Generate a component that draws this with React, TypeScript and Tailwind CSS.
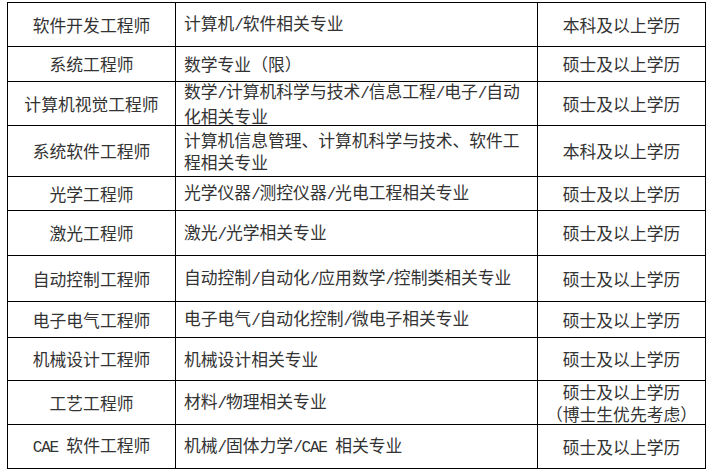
import React from "react";

type Row = { h: string; a: string; b: string[]; c: string[] };

const rows: Row[] = [
  { h: "h-[44px]", a: "软件开发工程师", b: ["计算机/软件相关专业"], c: ["本科及以上学历"] },
  { h: "h-[35px]", a: "系统工程师", b: ["数学专业（限）"], c: ["硕士及以上学历"] },
  {
    h: "h-[44px]",
    a: "计算机视觉工程师",
    b: ["数学/计算机科学与技术/信息工程/电子/自动", "化相关专业"],
    c: ["硕士及以上学历"],
  },
  {
    h: "h-[51px]",
    a: "系统软件工程师",
    b: ["计算机信息管理、计算机科学与技术、软件工", "程相关专业"],
    c: ["本科及以上学历"],
  },
  { h: "h-[34px]", a: "光学工程师", b: ["光学仪器/测控仪器/光电工程相关专业"], c: ["硕士及以上学历"] },
  { h: "h-[45px]", a: "激光工程师", b: ["激光/光学相关专业"], c: ["硕士及以上学历"] },
  {
    h: "h-[46px]",
    a: "自动控制工程师",
    b: ["自动控制/自动化/应用数学/控制类相关专业"],
    c: ["硕士及以上学历"],
  },
  { h: "h-[36px]", a: "电子电气工程师", b: ["电子电气/自动化控制/微电子相关专业"], c: ["硕士及以上学历"] },
  { h: "h-[43px]", a: "机械设计工程师", b: ["机械设计相关专业"], c: ["硕士及以上学历"] },
  { h: "h-[44px]", a: "工艺工程师", b: ["材料/物理相关专业"], c: ["硕士及以上学历", "（博士生优先考虑）"] },
  { h: "h-[44px]", a: "CAE 软件工程师", b: ["机械/固体力学/CAE 相关专业"], c: ["硕士及以上学历"] },
];

function Txt({ s }: { s: string }) {
  const parts = s.split(/([\x00-\x7F]+)/).filter((p) => p.length > 0);
  return (
    <>
      {parts.map((p, i) =>
        /^[\x00-\x7F]+$/.test(p) ? (
          <span
            key={i}
            className="whitespace-pre text-[16px] tracking-[-1.2px] [font-family:'Liberation_Mono','DejaVu_Sans_Mono',monospace]"
          >
            {p}
          </span>
        ) : (
          <span key={i}>{p}</span>
        )
      )}
    </>
  );
}

export default function App() {
  return (
    <div className="w-[712px] h-[473px] bg-white overflow-hidden pt-[2px] pl-[7px]">
      <div className="w-[699px] border-l border-t border-black text-[16.8px] leading-[22px] text-[#333333] [text-spacing-trim:space-all] [font-family:'Noto_Sans_CJK_SC','Noto_Sans',sans-serif]">
        {rows.map((r, i) => (
          <div key={i} className={`flex ${r.h}`}>
            <div className="w-[168px] shrink-0 border-r border-b border-black flex flex-col items-center justify-center text-center whitespace-nowrap">
              <div>
                <Txt s={r.a} />
              </div>
            </div>
            <div className="w-[362px] shrink-0 border-r border-b border-black flex flex-col justify-center pl-[8px] whitespace-nowrap">
              {r.b.map((l, j) => (
                <div key={j}>
                  <Txt s={l} />
                </div>
              ))}
            </div>
            <div className="w-[168px] shrink-0 border-r border-b border-black flex flex-col items-center justify-center text-center whitespace-nowrap">
              {r.c.map((l, j) => (
                <div key={j}>
                  <Txt s={l} />
                </div>
              ))}
            </div>
          </div>
        ))}
      </div>
    </div>
  );
}
